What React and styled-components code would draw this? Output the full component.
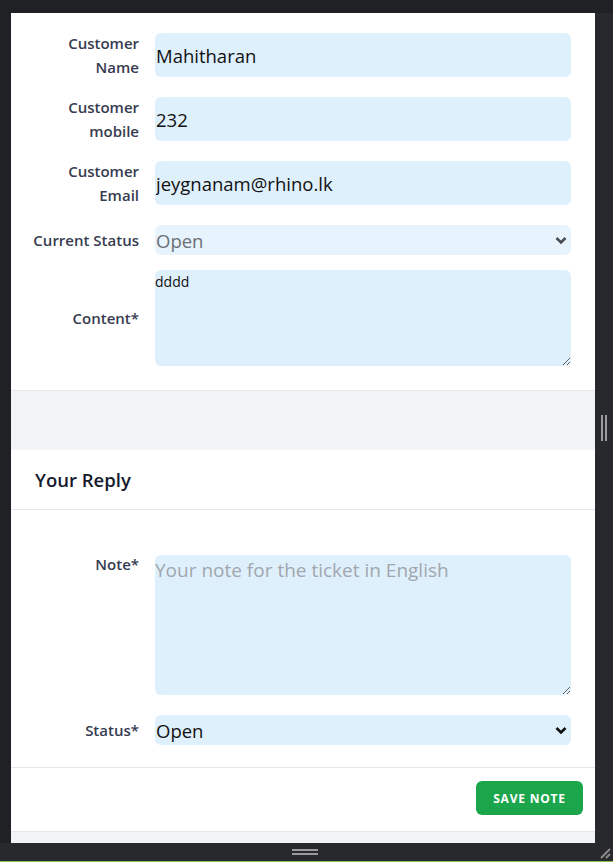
import styled, { createGlobalStyle } from "styled-components";

const GlobalStyle = createGlobalStyle`
  html, body {
    margin: 0;
    padding: 0;
    height: 100%;
    background: #202124;
    overflow: hidden;
  }
  #root {
    height: 100%;
  }
  * {
    box-sizing: border-box;
  }
`;

const Frame = styled.div`
  height: 100vh;
  display: flex;
  flex-direction: column;
  background: #202124;
  border-bottom: 1px solid #8bc34a;
`;

const TopGutter = styled.div`
  height: 13px;
  flex-shrink: 0;
`;

const MiddleRow = styled.div`
  flex: 1;
  display: flex;
  min-height: 0;
`;

const LeftGutter = styled.div`
  width: 11px;
  flex-shrink: 0;
`;

const RightGutter = styled.div`
  width: 18px;
  flex-shrink: 0;
  display: flex;
  align-items: center;
  justify-content: center;
  gap: 2px;
  background: #28292d;
`;

const VGrip = styled.span`
  width: 2px;
  height: 26px;
  background: #9a9a9a;
`;

const BottomBar = styled.div`
  height: 18px;
  flex-shrink: 0;
  display: flex;
  align-items: center;
  justify-content: space-between;
  background: #28292d;
  padding-left: 11px;
`;

const HGripWrap = styled.div`
  flex: 1;
  display: flex;
  flex-direction: column;
  align-items: center;
  gap: 2px;
  padding-left: 4px;
`;

const HGrip = styled.span`
  width: 26px;
  height: 2px;
  background: #9a9a9a;
`;

const Corner = styled.svg`
  width: 18px;
  height: 18px;
  flex-shrink: 0;
`;

const Viewport = styled.div`
  flex: 1;
  background: #f2f3f5;
  overflow: hidden;
  font-family: "Open Sans", "Noto Sans", Arial, sans-serif;
`;

const Card = styled.section`
  background: #fff;
  border-bottom: 1px solid #e4e6ea;
  margin-bottom: ${(p) => p.$gap || 0}px;
`;

const CardHeader = styled.div`
  height: 60px;
  display: flex;
  align-items: center;
  padding: 0 24px;
  border-bottom: 1px solid #e4e6ea;
  font-size: 18.5px;
  font-weight: 600;
  color: #151a2d;
`;

const FormBody = styled.div`
  padding: ${(p) => p.$pad || "20px 24px 24px 0"};
  display: flex;
  flex-direction: column;
`;

const Row = styled.div`
  display: grid;
  grid-template-columns: 128px 1fr;
  column-gap: 16px;
  align-items: ${(p) => (p.$top ? "start" : "center")};
  margin-top: ${(p) => p.$mt ?? 20}px;
`;

const Label = styled.label`
  text-align: right;
  font-size: 15px;
  font-weight: 600;
  line-height: 24px;
  color: #363b50;
  margin: ${(p) => (p.$top ? "-3px 0 0" : "-2px 0")};
`;

const TextInput = styled.input`
  height: 44px;
  width: 100%;
  border: none;
  outline: none;
  border-radius: 6px;
  background: #dff0fd;
  padding: 0 1px;
  font-family: inherit;
  font-size: 18.5px;
  color: #111;
`;

const SelectBox = styled.div`
  height: 30px;
  border-radius: 6px;
  background: ${(p) => (p.$muted ? "#e8f4fd" : "#dff0fd")};
  display: flex;
  align-items: center;
  justify-content: space-between;
  padding: 0 4px 0 1px;
  font-size: 18.5px;
  color: ${(p) => (p.$muted ? "#6b6f76" : "#111")};
`;

const Chevron = styled.svg`
  width: 12px;
  height: 9px;
`;

const TextArea = styled.textarea`
  width: 100%;
  height: ${(p) => p.$h}px;
  border: none;
  outline: none;
  border-radius: 6px;
  background: #dff0fd;
  padding: 2px 0;
  font-family: inherit;
  font-size: ${(p) => (p.$small ? "14px" : "19px")};
  color: #111;
  resize: vertical;
  display: block;

  &::placeholder {
    color: #a2a6ad;
  }
`;

const Footer = styled.div`
  height: 64px;
  display: flex;
  justify-content: flex-end;
  padding: 13px 12px 0 0;
  background: #fff;
  border-top: 1px solid #e4e6ea;
`;

const SaveButton = styled.button`
  height: 34px;
  width: 107px;
  border: none;
  border-radius: 6px;
  background: #1ba64c;
  color: #fff;
  font-family: inherit;
  font-size: 12px;
  font-weight: 700;
  letter-spacing: 0.8px;
  cursor: pointer;
`;

const Select = ({ value, muted, dark }) => (
  <SelectBox $muted={muted}>
    <span>{value}</span>
    <Chevron viewBox="0 0 12 9">
      <path
        d="M1.5 2 L6 6.5 L10.5 2"
        fill="none"
        stroke={dark ? "#111" : "#4a4d52"}
        strokeWidth="2.6"
      />
    </Chevron>
  </SelectBox>
);

export default function App() {
  return (
    <>
      <GlobalStyle />
      <Frame>
        <TopGutter />
        <MiddleRow>
          <LeftGutter />
          <Viewport>
            <Card $gap={59}>
              <FormBody>
                <Row $mt={0}>
                  <Label>
                    Customer
                    <br />
                    Name
                  </Label>
                  <TextInput defaultValue="Mahitharan" />
                </Row>
                <Row>
                  <Label>
                    Customer
                    <br />
                    mobile
                  </Label>
                  <TextInput defaultValue="232" />
                </Row>
                <Row>
                  <Label>
                    Customer
                    <br />
                    Email
                  </Label>
                  <TextInput defaultValue="jeygnanam@rhino.lk" />
                </Row>
                <Row>
                  <Label>Current Status</Label>
                  <Select value="Open" muted />
                </Row>
                <Row $mt={15}>
                  <Label>Content*</Label>
                  <TextArea $h={96} $small defaultValue="dddd" />
                </Row>
              </FormBody>
            </Card>
            <Card>
              <CardHeader>Your Reply</CardHeader>
              <FormBody $pad="45px 24px 22px 0">
                <Row $mt={0} $top>
                  <Label $top>Note*</Label>
                  <TextArea
                    $h={140}
                    placeholder="Your note for the ticket in English"
                  />
                </Row>
                <Row>
                  <Label>Status*</Label>
                  <Select value="Open" dark />
                </Row>
              </FormBody>
              <Footer>
                <SaveButton>SAVE NOTE</SaveButton>
              </Footer>
            </Card>
          </Viewport>
          <RightGutter>
            <VGrip />
            <VGrip />
          </RightGutter>
        </MiddleRow>
        <BottomBar>
          <HGripWrap>
            <HGrip />
            <HGrip />
          </HGripWrap>
          <Corner viewBox="0 0 18 18">
            <path d="M6 15 L15 6 M11 15 L15 11" stroke="#8a8a8a" strokeWidth="2" />
          </Corner>
        </BottomBar>
      </Frame>
    </>
  );
}
